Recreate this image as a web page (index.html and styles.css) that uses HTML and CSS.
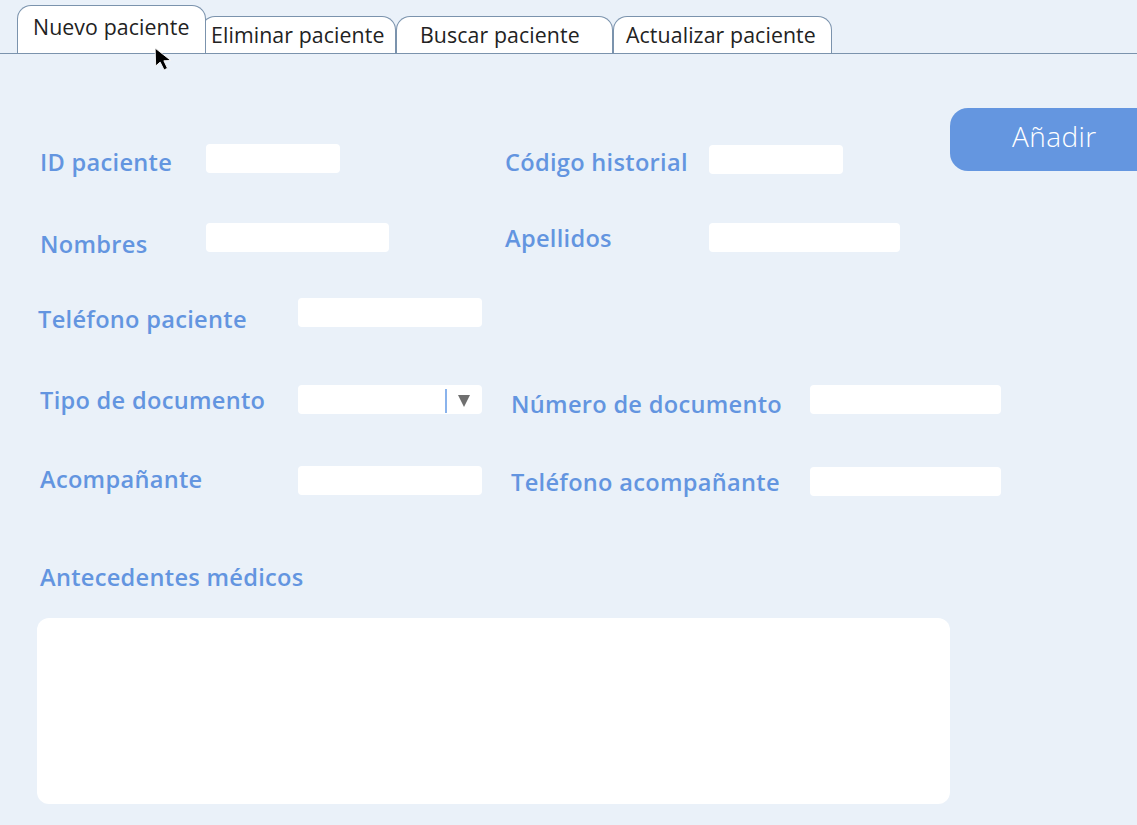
FILE: index.html
```html
<!DOCTYPE html>
<html lang="es">
<head>
<meta charset="utf-8">
<title>Pacientes</title>
<link rel="stylesheet" href="styles.css">
</head>
<body>
<div class="page">
  <nav class="tabs">
    <div class="tab tab-active t1">Nuevo paciente</div>
    <div class="tab t2">Eliminar paciente</div>
    <div class="tab t3">Buscar paciente</div>
    <div class="tab t4">Actualizar paciente</div>
  </nav>
  <svg class="cursor" width="20" height="24" viewBox="0 0 20 24"><path d="M1 1 L1.5 17 L5.5 13.5 L9 20.5 L12 19 L8.8 12.3 L15 12 Z" fill="#000" stroke="#fff" stroke-width="0.8" stroke-linejoin="round" transform="scale(1.12)"/></svg>

  <main class="form">
    <div class="row r1">
      <div class="field left-a">
        <span class="label lw1 p3">ID paciente</span>
        <span class="input w134"></span>
      </div>
      <div class="field right-a">
        <span class="label lw2 p3">Código historial</span>
        <span class="input w134 dn1"></span>
      </div>
      <button class="add">Añadir</button>
    </div>

    <div class="row r2">
      <div class="field left-a">
        <span class="label lw1 p6">Nombres</span>
        <span class="input w183"></span>
      </div>
      <div class="field">
        <span class="label lw2">Apellidos</span>
        <span class="input w191"></span>
      </div>
    </div>

    <div class="row r3">
      <div class="field">
        <span class="label lw3 left2 p6">Teléfono paciente</span>
        <span class="input w184"></span>
      </div>
    </div>

    <div class="row r4">
      <div class="field left-b">
        <span class="label lw3">Tipo de documento</span>
        <span class="input select w184"><span class="sel-div"></span><span class="sel-arrow"></span></span>
      </div>
      <div class="field">
        <span class="label lw4 p4">Número de documento</span>
        <span class="input w191"></span>
      </div>
    </div>

    <div class="row r5">
      <div class="field left-b">
        <span class="label lw3 up2">Acompañante</span>
        <span class="input w184"></span>
      </div>
      <div class="field">
        <span class="label lw4 p1">Teléfono acompañante</span>
        <span class="input w191 dn1"></span>
      </div>
    </div>

    <div class="label block-label">Antecedentes médicos</div>
    <div class="textarea"></div>
  </main>
</div>
</body>
</html>
```

FILE: styles.css
```css
* { box-sizing: border-box; }
html, body { margin: 0; padding: 0; }
body {
  background: #eaf1f9;
  font-family: "Open Sans", "Liberation Sans", sans-serif;
  width: 1137px;
  height: 825px;
  overflow: hidden;
}
.page { position: relative; height: 825px; overflow: hidden; }

.tabs {
  display: flex;
  align-items: flex-end;
  height: 54px;
  padding-left: 17px;
  border-bottom: 1px solid #7b93ad;
}
.tab {
  flex-shrink: 0;
  background: #fff;
  border: 1px solid #7b93ad;
  border-bottom: none;
  border-radius: 14px 14px 0 0;
  color: #222;
  font-size: 21.3px;
  letter-spacing: 0.1px;
  height: 37px;
  line-height: 36px;
  padding: 0 0 0 9px;
  white-space: nowrap;
}
.tab-active {
  height: 48px;
  line-height: 42px;
  padding-left: 15px;
  width: 189px;
  position: relative;
  z-index: 2;
}
.t2 { width: 195px; margin-left: -5px; }
.t3 { width: 217px; padding-left: 23px; }
.t4 { width: 219px; padding-left: 12px; }

.cursor { position: absolute; left: 154px; top: 47px; z-index: 5; }

.form { padding: 54px 0 0 40px; }
.row { display: flex; align-items: flex-start; }
.field { display: flex; align-items: flex-start; flex-shrink: 0; }
.left-a { width: 465px; }
.left-b { width: 471px; }
.r1 .field { margin-top: 36px; }
.right-a { width: 445px; }

.label {
  color: #6395e0;
  font-size: 23.6px;
  font-weight: 600;
  letter-spacing: 0.3px;
  height: 30px;
  line-height: 30px;
  white-space: nowrap;
  flex-shrink: 0;
}
.lw1 { width: 166px; }
.lw2 { width: 204px; }
.lw3 { width: 258px; }
.lw4 { width: 299px; }
.left2 { margin-left: -2px; width: 260px; }
.p1 { padding-top: 1px; height: 31px; }
.p3 { padding-top: 3px; height: 33px; }
.p4 { padding-top: 4px; height: 34px; }
.p6 { padding-top: 6px; height: 36px; }
.up2 { margin-top: -2px; }

.input {
  display: block;
  flex-shrink: 0;
  height: 29px;
  background: #fff;
  border-radius: 4px;
}
.dn1 { margin-top: 1px; }
.w134 { width: 134px; }
.w183 { width: 183px; }
.w184 { width: 184px; }
.w191 { width: 191px; }

.add {
  flex-shrink: 0;
  width: 200px;
  height: 63px;
  border: none;
  border-radius: 18px 0 0 18px;
  background: #6496e0;
  color: #fff;
  font-family: inherit;
  font-size: 28px;
  font-weight: 300;
  letter-spacing: 0.4px;
  text-align: left;
  padding: 0 0 8px 62px;
  cursor: pointer;
}
.r2 { margin-top: 46px; }
.r3 { margin-top: 39px; }
.r4 { margin-top: 51px; }
.r5 { margin-top: 47px; }

.select { position: relative; }
.sel-div {
  position: absolute;
  left: 147px; top: 4px;
  width: 2px; height: 24px;
  background: #8ab3ec;
}
.sel-arrow {
  position: absolute;
  left: 160px; top: 10px;
  width: 0; height: 0;
  border-left: 6px solid transparent;
  border-right: 6px solid transparent;
  border-top: 12px solid #6f6f6f;
}

.block-label { margin-top: 65px; height: 30px; }
.textarea {
  margin: 26px 0 0 -3px;
  width: 913px;
  height: 186px;
  background: #fff;
  border-radius: 12px;
}
```
